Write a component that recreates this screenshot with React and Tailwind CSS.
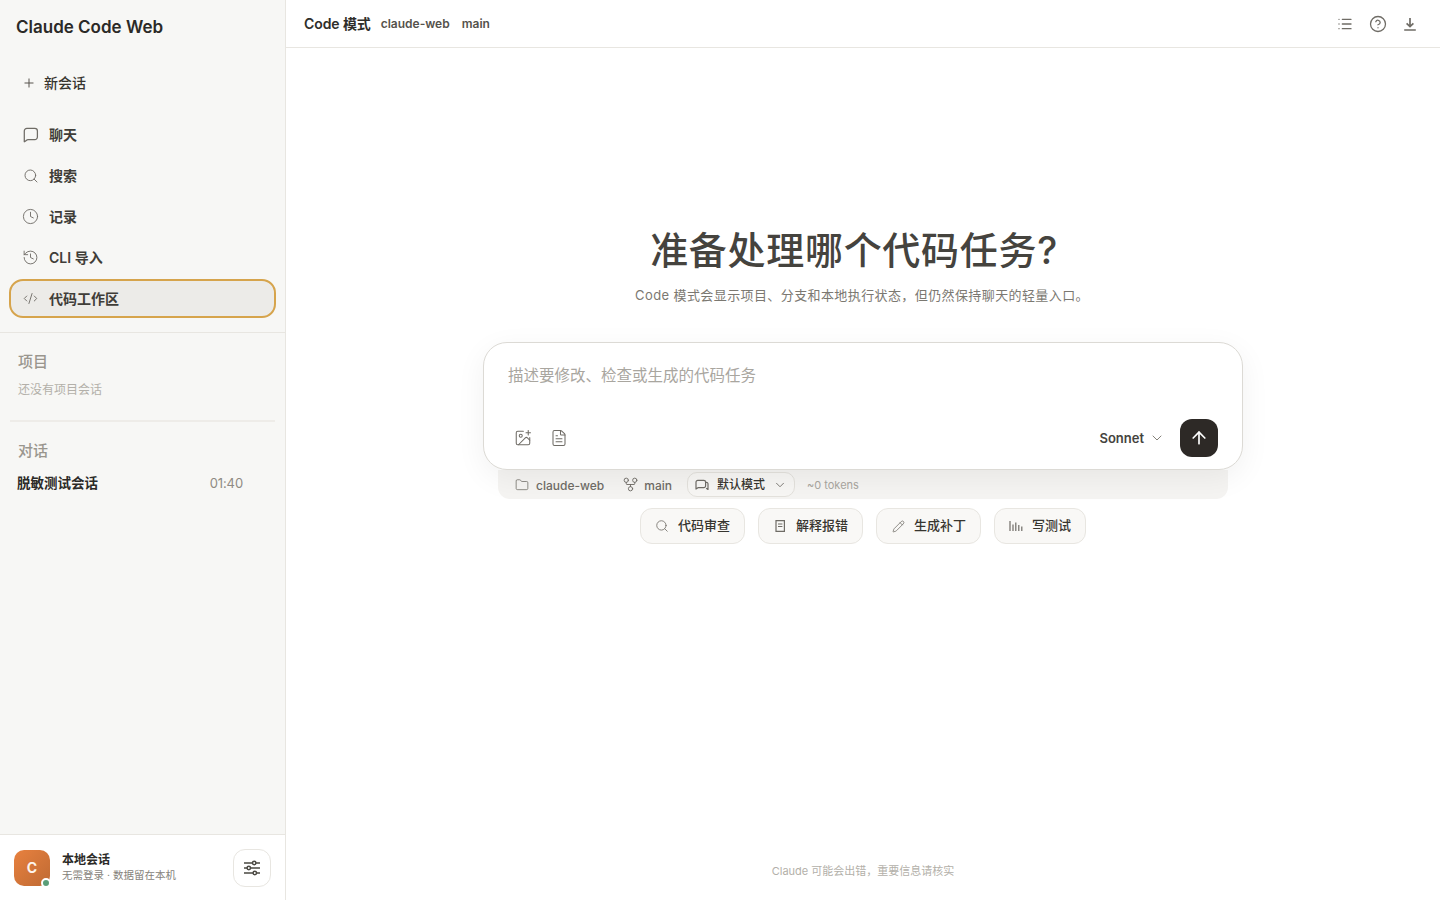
import React from 'react';
import { Plus, Search, Clock, History, CodeXml, List, CircleHelp, ImagePlus, FileText, Folder, GitFork, ChevronDown, ArrowUp, Pencil } from 'lucide-react';

const font = { fontFamily: 'Inter, "Noto Sans CJK SC", sans-serif' };

function ChatIcon() {
  return (
    <svg width="16" height="16" viewBox="0 0 16 16" fill="none" stroke="currentColor" strokeWidth="1.25" strokeLinejoin="round">
      <path d="M1.3 14.8V4A2.6 2.6 0 0 1 3.9 1.4h7.900A2.600 2.600 0 0 1 14.400 4v6a2.600 2.600 0 0 1-2.600 2.600H5.200c-1.400 0-2.800 1.700-3.900 2.200Z" />
    </svg>
  );
}

function NavItem({ icon, label, active }) {
  return (
    <div className={active
      ? 'flex h-[39px] items-center gap-[10px] rounded-[14px] border-2 border-[#d6a44c] bg-[#ecebe8] pl-[11px] text-sm font-semibold text-[#3f3d38]'
      : 'flex h-[39px] items-center gap-[10px] rounded-[14px] border-2 border-transparent pl-[11px] text-sm font-semibold text-[#3f3d38]'}>
      <span className="flex w-[17px] justify-center text-[#6f6c66]">{icon}</span>
      <span>{label}</span>
    </div>
  );
}

function Sidebar() {
  return (
    <aside className="flex h-[900px] w-[286px] shrink-0 flex-col border-r border-[#e8e6e1] bg-[#f7f7f5]">
      <div className="flex h-[56px] items-center pl-4 text-[17px] font-semibold text-[#2b2a27]">Claude Code Web</div>
      <div className="flex h-[54px] items-center gap-[8px] pl-[22px] text-sm font-medium text-[#37352f]">
        <Plus size={14} strokeWidth={1.7} className="text-[#55524c]" />
        <span>新会话</span>
      </div>
      <nav className="flex flex-col gap-[2px] px-[9px] pt-[5px]">
        <NavItem icon={<ChatIcon />} label="聊天" />
        <NavItem icon={<Search size={16} strokeWidth={1.4} />} label="搜索" />
        <NavItem icon={<Clock size={17} strokeWidth={1.3} />} label="记录" />
        <NavItem icon={<History size={17} strokeWidth={1.3} />} label="CLI 导入" />
        <NavItem icon={<CodeXml size={15} strokeWidth={1.5} />} label="代码工作区" active />
      </nav>
      <div className="mt-[14px] border-t border-[#e8e6e1] px-[18px] pt-[19px]">
        <div className="text-[15px] font-medium leading-5 text-[#9a968e]">项目</div>
        <div className="mt-[8px] text-xs leading-5 text-[#b3b0a9]">还没有项目会话</div>
      </div>
      <div className="mx-[10px] mt-[20px] h-[2px] bg-[#eeece8]" />
      <div className="px-[18px] pt-[19px] text-[15px] font-medium leading-5 text-[#9a968e]">对话</div>
      <div className="mt-[12px] flex items-center justify-between pl-[17px] pr-[42px]">
        <span className="text-[13.5px] font-semibold leading-5 text-[#2b2a27]">脱敏测试会话</span>
        <span className="text-[13px] leading-5 tracking-[-0.1px] text-[#8f8b83]">01:40</span>
      </div>
      <div className="mt-auto flex h-[66px] items-center justify-between border-t border-[#e8e6e1] bg-white pl-[14px] pr-[14px]">
        <div className="flex items-center gap-3">
          <div className="relative flex h-[36px] w-[36px] items-center justify-center rounded-[10px] bg-gradient-to-br from-[#e8813f] to-[#bf6a33] text-sm font-bold text-[#fdf4ec]">
            C
            <span className="absolute bottom-[-2px] right-[-1px] h-[10px] w-[10px] rounded-full border-2 border-white bg-[#5a9e78]" />
          </div>
          <div>
            <div className="text-xs font-semibold leading-4 text-[#2b2a27]">本地会话</div>
            <div className="text-[10.5px] leading-4 text-[#85827a]">无需登录 · 数据留在本机</div>
          </div>
        </div>
        <div className="flex h-[38px] w-[38px] items-center justify-center rounded-[12px] border border-[#e8e6e1] bg-white text-[#4a4842]">
          <svg width="18" height="18" viewBox="0 0 18 18" fill="none" stroke="currentColor" strokeWidth="1.5">
            <path d="M1 4h8.500M13 4h4M1 9h3M7.500 9h9.500M1 14h9M13.500 14h3.500" />
            <circle cx="11.2" cy="4" r="1.7" />
            <circle cx="5.8" cy="9" r="1.7" />
            <circle cx="11.8" cy="14" r="1.7" />
          </svg>
        </div>
      </div>
    </aside>
  );
}

function Header() {
  return (
    <header className="flex h-[48px] shrink-0 items-center justify-between border-b border-[#e8e6e1] pl-[18px] pr-[22px]">
      <div className="flex items-center">
        <span className="text-sm font-semibold tracking-[-0.1px] text-[#2f2e2a]">Code 模式</span>
        <span className="ml-[10px] text-xs font-semibold text-[#55524c]">claude-web</span>
        <span className="ml-3 text-xs font-semibold text-[#55524c]">main</span>
      </div>
      <div className="flex items-center text-[#6f6c66]">
        <List size={16} strokeWidth={2} />
        <CircleHelp size={18} strokeWidth={1.7} className="ml-[16px]" />
        <svg width="16" height="16" viewBox="0 0 16 16" fill="none" stroke="currentColor" strokeWidth="1.7" className="ml-[15px]">
          <path d="M8 2v8.200M4.600 7.400 8 10.600l3.400-3.200M2.200 14h11.600" />
        </svg>
      </div>
    </header>
  );
}

function Chip({ icon, label }) {
  return (
    <div className="flex h-[36px] items-center gap-[9px] rounded-[12px] border border-[#e8e6e1] bg-[#f9f8f6] px-[14px] text-[13px] font-medium text-[#37352f]">
      <span className="flex w-[14px] justify-center text-[#6f6c66]">{icon}</span>
      <span>{label}</span>
    </div>
  );
}

function Main() {
  return (
    <main className="flex h-[900px] min-w-0 flex-1 flex-col bg-white">
      <Header />
      <div className="flex flex-1 flex-col items-center pt-[178px]">
        <h1 className="pr-[18px] text-[38px] font-medium leading-[48px] tracking-[0.7px] text-[#45433e]">准备处理哪个代码任务?</h1>
        <p className="mt-[11px] pr-[2px] text-[13px] leading-5 tracking-[0.4px] text-[#7b7871]">Code 模式会显示项目、分支和本地执行状态，但仍然保持聊天的轻量入口。</p>
        <div className="relative z-10 mt-[37px] flex h-[128px] w-[760px] flex-col justify-between rounded-[24px] border border-[#dcdad5] bg-white pb-[12px] pl-[24px] pr-[24px] pt-[21px] shadow-[0_8px_30px_rgba(0,0,0,0.06)]">
          <div className="text-[15.5px] leading-6 text-[#a9a69f]">描述要修改、检查或生成的代码任务</div>
          <div className="flex items-center justify-between">
            <div className="flex items-center gap-[18px] pl-[6px] text-[#6f6c66]">
              <ImagePlus size={18} strokeWidth={1.4} />
              <FileText size={18} strokeWidth={1.4} />
            </div>
            <div className="flex items-center">
              <span className="relative top-[1px] text-[13px] font-semibold text-[#45433e]">Sonnet</span>
              <ChevronDown size={16} strokeWidth={1.5} className="ml-[5px] text-[#85827a]" />
              <div className="ml-[15px] flex h-[38px] w-[38px] items-center justify-center rounded-[12px] bg-[#2d2926] text-white">
                <ArrowUp size={20} strokeWidth={2} />
              </div>
            </div>
          </div>
        </div>
        <div className="flex h-[29px] w-[730px] items-center rounded-b-[12px] bg-[#f5f4f2] pl-[17px] text-xs font-medium text-[#6f6c66]">
          <Folder size={14} strokeWidth={1.3} />
          <span className="relative top-[1px] ml-[7px]">claude-web</span>
          <GitFork size={17} strokeWidth={1.3} className="ml-[18px]" />
          <span className="relative top-[1px] ml-[5px]">main</span>
          <div className="ml-[15px] flex h-[25px] items-center gap-[8px] rounded-[10px] border border-[#e3e1dc] bg-[#f7f6f4] pl-[7px] pr-[7px] text-[#37352f]">
            <svg width="14" height="14" viewBox="0 0 14 14" fill="none" stroke="#6f6c66" strokeWidth="1.2" strokeLinejoin="round">
              <path d="M1 11V4.200a1.800 1.800 0 0 1 1.800-1.800h6a1.800 1.800 0 0 1 1.800 1.800v3.600a1.800 1.800 0 0 1-1.800 1.800H3.400C2.600 9.600 1.800 10.500 1 11Z" />
              <path d="M10.600 4.400h1a1.400 1.400 0 0 1 1.400 1.400v5.700c-.6-.5-1.200-1-1.900-1.300" />
            </svg>
            <span>默认模式</span>
            <ChevronDown size={14} strokeWidth={1.5} className="text-[#6f6c66]" />
          </div>
          <span className="relative top-[1px] ml-[12px] text-[11px] font-normal text-[#a9a69f]">~0 tokens</span>
        </div>
        <div className="mt-[9px] flex gap-[13px]">
          <Chip icon={<Search size={16} strokeWidth={1.4} />} label="代码审查" />
          <Chip icon={<svg width="14" height="14" viewBox="0 0 14 14" fill="none" stroke="currentColor" strokeWidth="1.2"><path d="M3 1.600h8.400v10.800H3zM5 5h4.400M5 7.500h4.400" /></svg>} label="解释报错" />
          <Chip icon={<Pencil size={13} strokeWidth={1.4} />} label="生成补丁" />
          <Chip icon={<svg width="14" height="14" viewBox="0 0 14 14" fill="none" stroke="currentColor" strokeWidth="1.2"><path d="M1 2v10M4 5.500V12M6.800 3.500V12M9.800 6v6M12.800 7.500V12" /></svg>} label="写测试" />
        </div>
      </div>
      <div className="flex h-[57px] shrink-0 justify-center pt-[20px] text-[11px] leading-4 text-[#b3b0a9]">Claude 可能会出错，重要信息请核实</div>
    </main>
  );
}

export default function App() {
  return (
    <div className="flex h-[900px] w-[1440px] overflow-hidden" style={font}>
      <Sidebar />
      <Main />
    </div>
  );
}
